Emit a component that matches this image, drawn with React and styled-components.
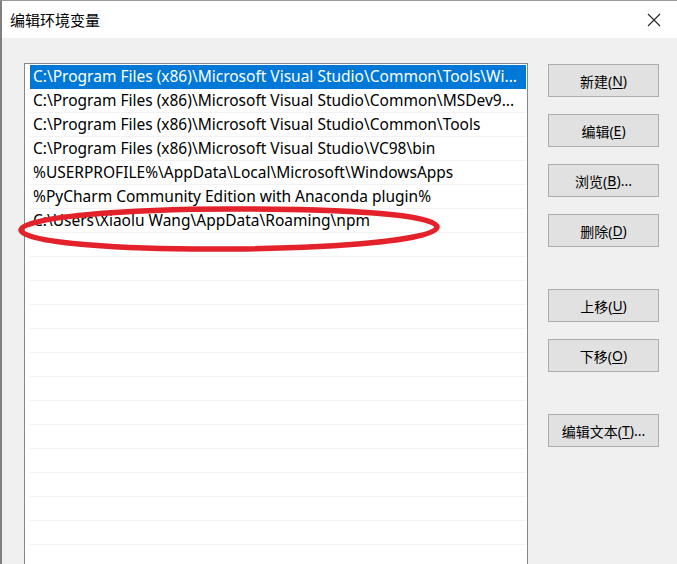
import styled, { createGlobalStyle } from 'styled-components'

const GlobalStyle = createGlobalStyle`
  html, body {
    margin: 0;
    padding: 0;
    width: 677px;
    height: 564px;
    overflow: hidden;
    background: #f0f0f0;
  }
  * {
    box-sizing: border-box;
  }
`

const paths = [
  'C:\\Program Files (x86)\\Microsoft Visual Studio\\Common\\Tools\\Wi...',
  'C:\\Program Files (x86)\\Microsoft Visual Studio\\Common\\MSDev9...',
  'C:\\Program Files (x86)\\Microsoft Visual Studio\\Common\\Tools',
  'C:\\Program Files (x86)\\Microsoft Visual Studio\\VC98\\bin',
  '%USERPROFILE%\\AppData\\Local\\Microsoft\\WindowsApps',
  '%PyCharm Community Edition with Anaconda plugin%',
  'C:\\Users\\Xiaolu Wang\\AppData\\Roaming\\npm',
]

const buttons = [
  { label: '新建', key: 'N' },
  { label: '编辑', key: 'E' },
  { label: '浏览', key: 'B', dots: true },
  { label: '删除', key: 'D' },
  { label: '上移', key: 'U', spaced: true },
  { label: '下移', key: 'O' },
  { label: '编辑文本', key: 'T', dots: true, spaced: true },
]

const App = () => {
  const rows = [...paths, ...Array(14).fill('')]

  return (
    <Window>
      <GlobalStyle />
      <TitleBar>
        <Title>编辑环境变量</Title>
        <CloseButton>
          <svg width="14" height="14" viewBox="0 0 14 14">
            <path d="M1 1 L13 13 M13 1 L1 13" stroke="#222" strokeWidth="1.1" fill="none" />
          </svg>
        </CloseButton>
      </TitleBar>
      <Body>
        <ListBox>
          {rows.map((text, i) => (
            <Row key={i} $selected={i === 0}>{text}</Row>
          ))}
          {/* red hand-drawn mark round the npm entry */}
          <Circle viewBox="0 0 440 60" width="440" height="60">
            <path
              d="M215 4 C320 4 420 9 420 22 C420 35 320 43 215 44 C110 45 4 38 4 25 C4 12 110 4 215 4 Z"
              stroke="#e3222b"
              strokeWidth="5.5"
              fill="none"
            />
            <path
              d="M40 37 C90 43 150 45 215 44 C300 43 370 38 405 31"
              stroke="#e3222b"
              strokeWidth="3"
              fill="none"
              strokeLinecap="round"
            />
          </Circle>
        </ListBox>
        <ButtonColumn>
          {buttons.map((b) => (
            <Button key={b.key} $spaced={b.spaced}>
              {b.label}(<u>{b.key}</u>){b.dots ? '...' : ''}
            </Button>
          ))}
        </ButtonColumn>
      </Body>
    </Window>
  )
}

const Window = styled.div`
  width: 677px;
  height: 564px;
  display: flex;
  flex-direction: column;
  border-top: 1px solid #9a9a9a;
  border-left: 2px solid #808080;
  background: #f0f0f0;
  font-family: "Noto Sans", "Noto Sans CJK SC", sans-serif;
  overflow: hidden;
`

const TitleBar = styled.div`
  height: 37px;
  background: #ffffff;
  display: flex;
  align-items: center;
  justify-content: space-between;
  padding-left: 8px;
  flex-shrink: 0;
`

const Title = styled.div`
  font-family: "Noto Sans CJK SC", sans-serif;
  font-size: 15px;
  color: #000;
`

const CloseButton = styled.div`
  width: 46px;
  height: 37px;
  display: flex;
  align-items: center;
  justify-content: center;
`

const Body = styled.div`
  flex: 1;
  display: flex;
  gap: 20px;
  padding: 25px 0 0 22px;
`

const ListBox = styled.div`
  position: relative;
  width: 504px;
  height: 540px;
  background: #ffffff;
  border: 1px solid #828790;
  padding: 1px 1px 0 5px;
  flex-shrink: 0;
`

const Row = styled.div`
  height: 24px;
  line-height: 23px;
  padding-left: 3px;
  font-size: 15.5px;
  white-space: nowrap;
  overflow: hidden;
  color: ${(p) => (p.$selected ? '#ffffff' : '#000000')};
  background: ${(p) => (p.$selected ? '#0078d7' : 'transparent')};
  border-bottom: 1px solid ${(p) => (p.$selected ? '#0078d7' : '#f2f2f2')};
`

const Circle = styled.svg`
  position: absolute;
  left: -8px;
  top: 141px;
  pointer-events: none;
`

const ButtonColumn = styled.div`
  display: flex;
  flex-direction: column;
  padding-top: 1px;
`

const Button = styled.div`
  width: 111px;
  height: 33px;
  margin-top: ${(p) => (p.$spaced ? '42px' : '17px')};
  &:first-child {
    margin-top: 0;
  }
  background: #e1e1e1;
  border: 1px solid #adadad;
  display: flex;
  align-items: center;
  justify-content: center;
  font-size: 14px;
  color: #000;

  u {
    text-underline-offset: 2px;
  }
`

export default App
